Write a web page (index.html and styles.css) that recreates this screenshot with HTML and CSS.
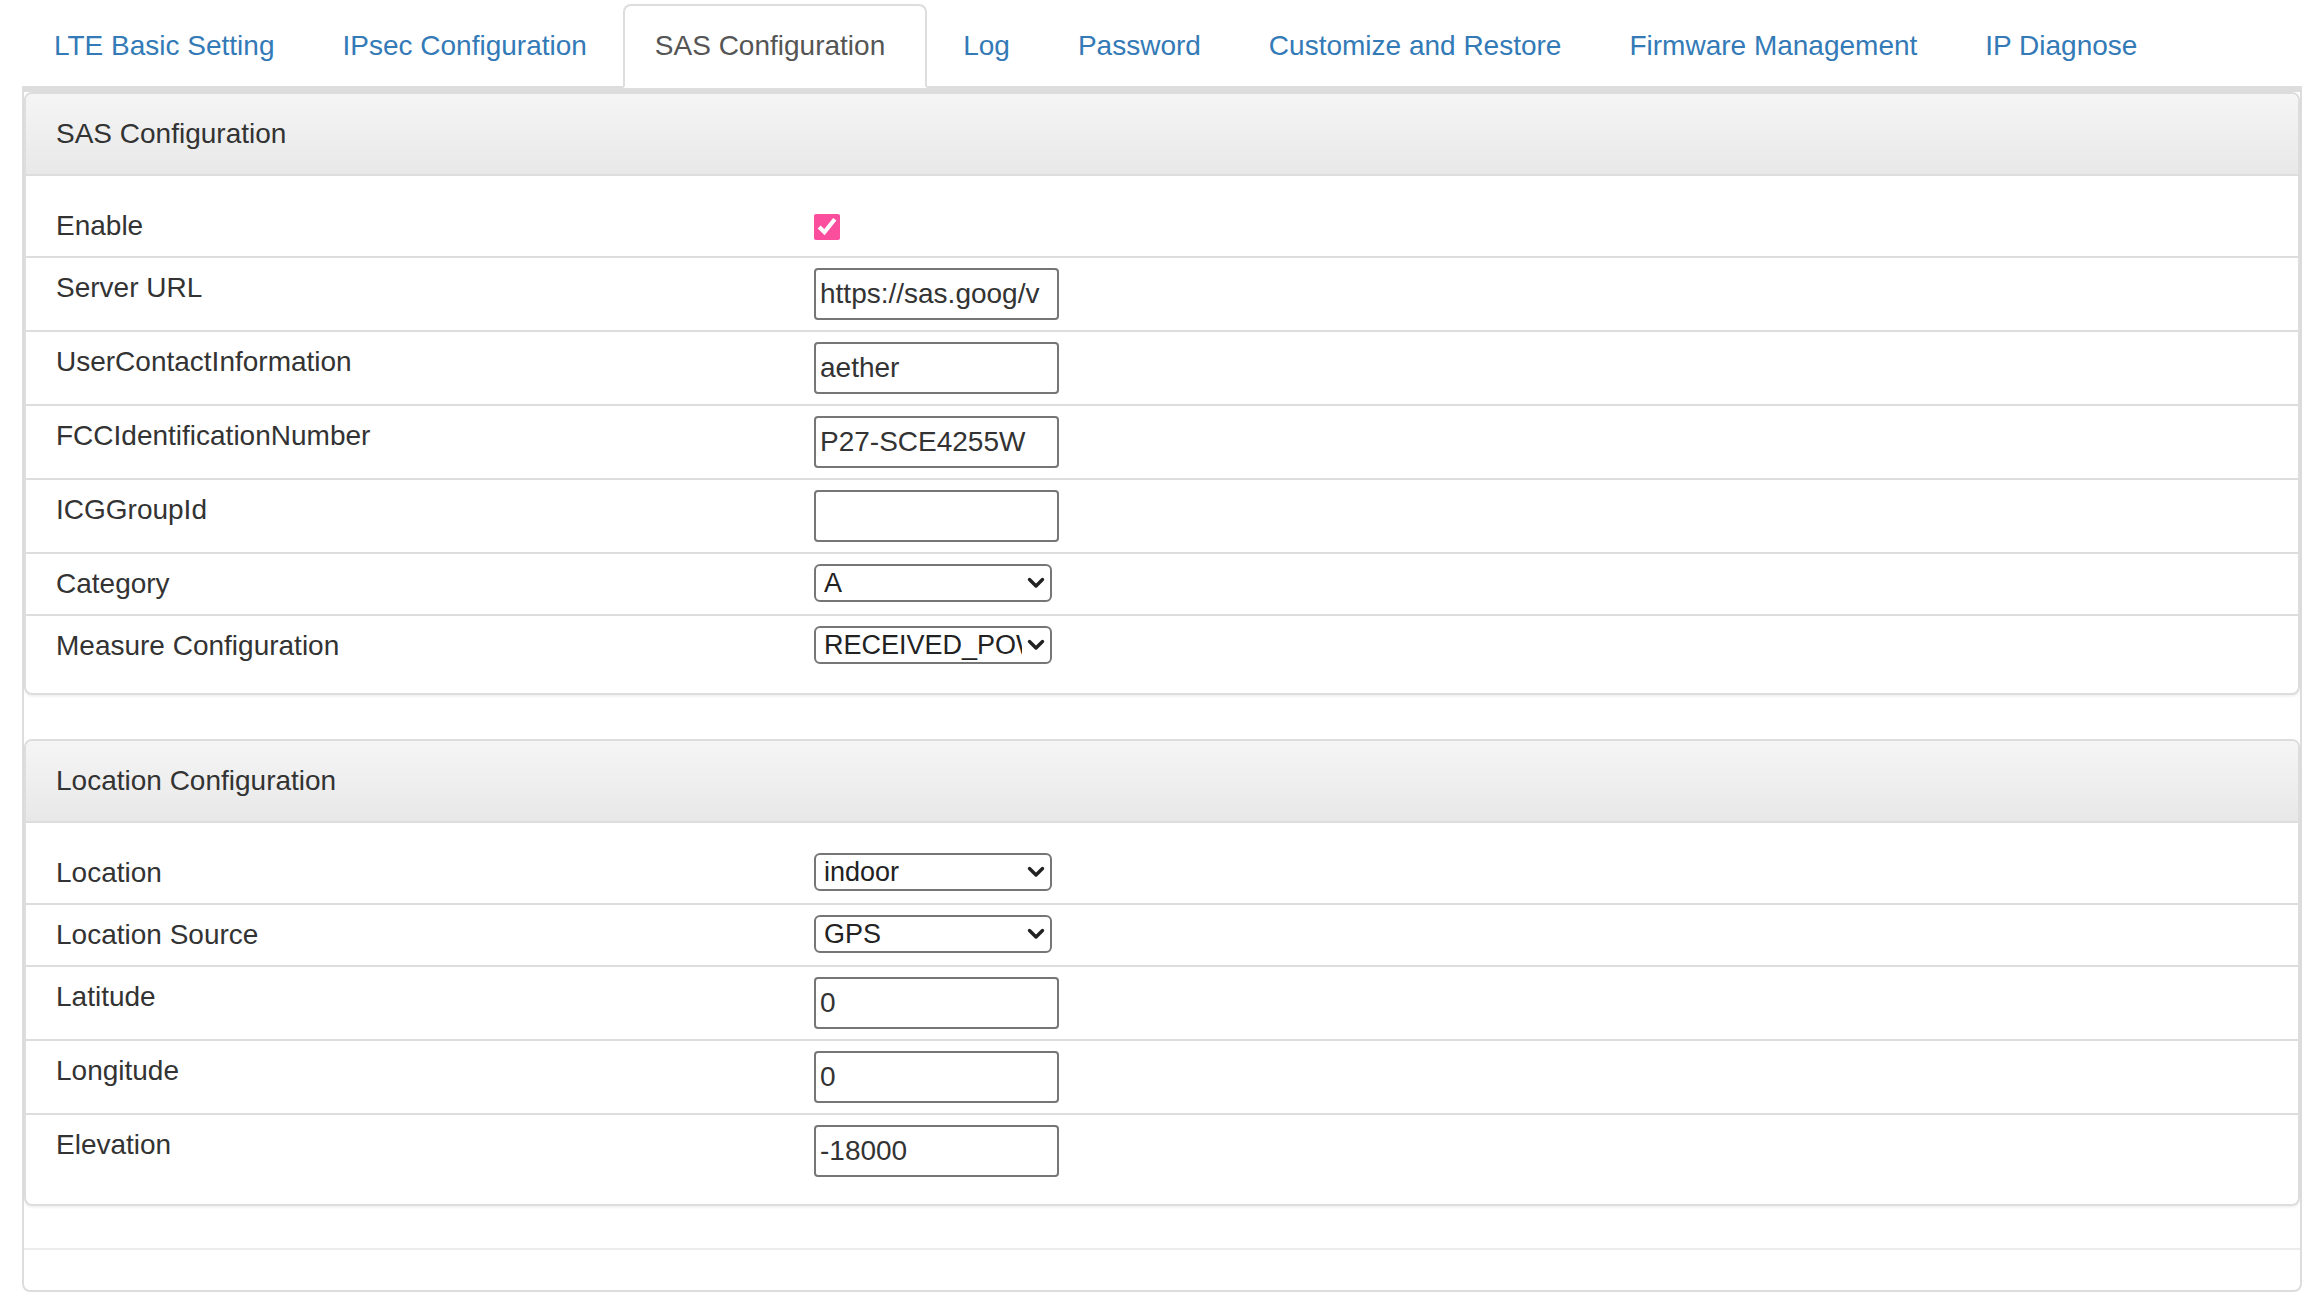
FILE: index.html
```html
<!DOCTYPE html>
<html>
<head>
<meta charset="utf-8">
<title>SAS Configuration</title>
<link rel="stylesheet" href="styles.css">
</head>
<body>
<div class="page">
  <ul class="tabs">
    <li class="tab"><a href="#">LTE Basic Setting</a></li>
    <li class="tab"><a href="#">IPsec Configuration</a></li>
    <li class="tab active"><a href="#">SAS Configuration</a></li>
    <li class="tab"><a href="#">Log</a></li>
    <li class="tab"><a href="#">Password</a></li>
    <li class="tab"><a href="#">Customize and Restore</a></li>
    <li class="tab"><a href="#">Firmware Management</a></li>
    <li class="tab"><a href="#">IP Diagnose</a></li>
  </ul>
  <div class="tab-content">
    <div class="panel">
      <div class="panel-heading">SAS Configuration</div>
      <div class="panel-body">
        <table class="form-table">
          <colgroup><col class="col-label"><col></colgroup>
          <tbody>
            <tr><td>Enable</td><td><input class="check" type="checkbox" checked></td></tr>
            <tr><td>Server URL</td><td><input class="text-input" type="text" value="https://sas.goog/v1.2/"></td></tr>
            <tr><td>UserContactInformation</td><td><input class="text-input" type="text" value="aether"></td></tr>
            <tr><td>FCCIdentificationNumber</td><td><input class="text-input" type="text" value="P27-SCE4255W"></td></tr>
            <tr><td>ICGGroupId</td><td><input class="text-input" type="text" value=""></td></tr>
            <tr><td>Category</td><td>
              <div class="select-wrap">
                <select class="select"><option>A</option><option>B</option></select>
                <svg class="chev" viewBox="0 0 18 12"><polyline points="2.5,2.5 9,9 15.5,2.5" fill="none" stroke="#222" stroke-width="3.4" stroke-linecap="round" stroke-linejoin="round"/></svg>
              </div>
            </td></tr>
            <tr><td>Measure Configuration</td><td>
              <div class="select-wrap">
                <select class="select"><option>RECEIVED_POWER_WITHOUT_GRANT</option></select>
                <svg class="chev" viewBox="0 0 18 12"><polyline points="2.5,2.5 9,9 15.5,2.5" fill="none" stroke="#222" stroke-width="3.4" stroke-linecap="round" stroke-linejoin="round"/></svg>
              </div>
            </td></tr>
          </tbody>
        </table>
      </div>
    </div>
    <div class="panel panel-last">
      <div class="panel-heading">Location Configuration</div>
      <div class="panel-body">
        <table class="form-table">
          <colgroup><col class="col-label"><col></colgroup>
          <tbody>
            <tr><td>Location</td><td>
              <div class="select-wrap">
                <select class="select"><option>indoor</option><option>outdoor</option></select>
                <svg class="chev" viewBox="0 0 18 12"><polyline points="2.5,2.5 9,9 15.5,2.5" fill="none" stroke="#222" stroke-width="3.4" stroke-linecap="round" stroke-linejoin="round"/></svg>
              </div>
            </td></tr>
            <tr><td>Location Source</td><td>
              <div class="select-wrap">
                <select class="select"><option>GPS</option><option>Manual</option></select>
                <svg class="chev" viewBox="0 0 18 12"><polyline points="2.5,2.5 9,9 15.5,2.5" fill="none" stroke="#222" stroke-width="3.4" stroke-linecap="round" stroke-linejoin="round"/></svg>
              </div>
            </td></tr>
            <tr><td>Latitude</td><td><input class="text-input" type="text" value="0"></td></tr>
            <tr><td>Longitude</td><td><input class="text-input" type="text" value="0"></td></tr>
            <tr><td>Elevation</td><td><input class="text-input" type="text" value="-18000"></td></tr>
          </tbody>
        </table>
      </div>
    </div>
    <div class="tab-footer"></div>
  </div>
</div>
</body>
</html>
```

FILE: styles.css
```css
* {
  box-sizing: border-box;
}

html,
body {
  margin: 0;
  padding: 0;
  background: #fff;
}

body {
  font-family: "Liberation Sans", Arial, Helvetica, sans-serif;
  font-size: 28px;
  line-height: 40px;
  color: #333;
}

.page {
  width: 2312px;
  padding: 4px 10px 0 22px;
}

/* ---- tabs ---- */
.tabs {
  list-style: none;
  margin: 0;
  padding: 0;
  display: flex;
  border-bottom: 2px solid #ddd;
}

.tab {
  margin-bottom: -2px;
}

.tab a {
  display: block;
  margin-right: 4px;
  padding: 20px 30px;
  border: 2px solid transparent;
  border-radius: 8px 8px 0 0;
  color: #337ab7;
  text-decoration: none;
  line-height: 40px;
  white-space: nowrap;
}

.tab.active a {
  padding-right: 40px;
  color: #555;
  background: #fff;
  border-color: #ddd;
  border-bottom-color: transparent;
}

/* ---- content frame ---- */
.tab-content {
  border: 2px solid #ddd;
  border-top-width: 4px;
  border-radius: 0 0 8px 8px;
}

.panel {
  background: #fff;
  border: 2px solid #ddd;
  border-radius: 8px;
  box-shadow: 0 2px 2px rgba(0, 0, 0, 0.05);
  margin-bottom: 44px;
}

.panel-last {
  margin-bottom: 42px;
}

.panel-heading {
  padding: 20px 30px;
  background: linear-gradient(to bottom, #f5f5f5 0%, #e8e8e8 100%);
  border-bottom: 2px solid #ddd;
  border-radius: 6px 6px 0 0;
  color: #333;
}

.panel-body {
  padding: 20px 0 17px;
}

.tab-footer {
  height: 42px;
  border-top: 2px solid #ececec;
}

/* ---- form table ---- */
.form-table {
  width: 100%;
  border-collapse: separate;
  border-spacing: 0;
  table-layout: fixed;
}

.col-label {
  width: 778px;
}

.form-table td {
  padding: 10px;
  vertical-align: top;
  border-top: 2px solid #ddd;
}

.form-table tr:first-child td {
  border-top: 0;
}

.form-table td:first-child {
  padding-left: 30px;
}

.check {
  display: block;
  width: 26px;
  height: 26px;
  margin: 8px 0 0;
  accent-color: #fb4f9e;
}

.text-input {
  display: block;
  width: 245px;
  height: 52px;
  margin: 0;
  padding: 0 16px 0 4px;
  border: 2px solid #767676;
  border-radius: 4px;
  background: #fff;
  font-family: "Liberation Sans", Arial, Helvetica, sans-serif;
  font-size: 28px;
  color: #333;
  outline: none;
}

.select-wrap {
  position: relative;
  width: 238px;
}

.select {
  appearance: none;
  -webkit-appearance: none;
  display: block;
  width: 100%;
  height: 38px;
  margin: 0;
  padding: 0 28px 0 8px;
  border: 2px solid #767676;
  border-radius: 6px;
  background: #fff;
  font-family: "Liberation Sans", Arial, Helvetica, sans-serif;
  font-size: 27px;
  color: #222;
  outline: none;
}

.chev {
  position: absolute;
  right: 7px;
  top: 50%;
  width: 18px;
  height: 12px;
  margin-top: -6px;
  pointer-events: none;
}
```
